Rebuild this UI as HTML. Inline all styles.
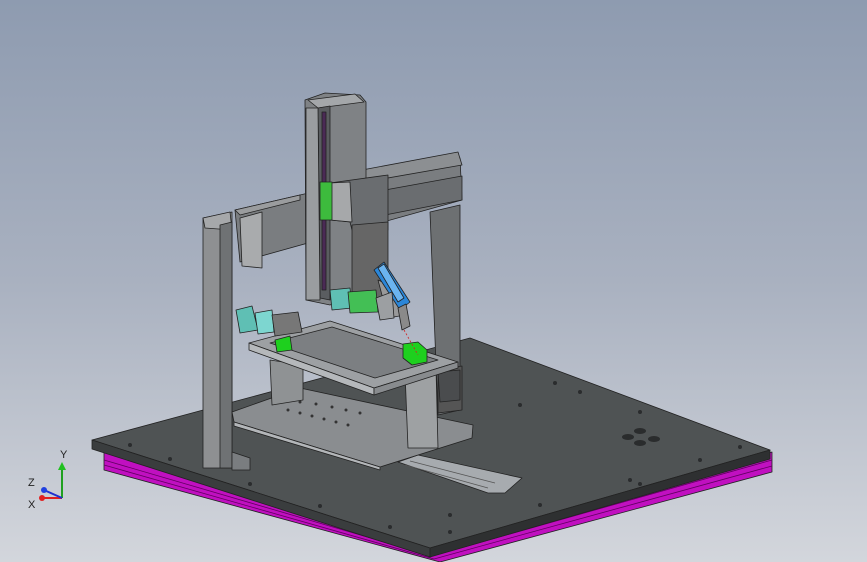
<!DOCTYPE html>
<html><head><style>
html,body{margin:0;padding:0;width:867px;height:562px;overflow:hidden}
body{background:linear-gradient(180deg,#8e9bb0 0%,#a9b1c0 50%,#d3d6dc 100%)}
svg{position:absolute;left:0;top:0}
</style></head><body>
<svg width="867" height="562" viewBox="0 0 867 562" stroke="#222" stroke-width="0.8" stroke-linejoin="round">
<!-- magenta base frame -->
<polygon points="104,452 430,550 772,452 772,472 440,562 104,470" fill="#c010c0"/>
<polyline points="104,460 432,556 772,460" fill="none" stroke="#600060"/>
<polyline points="104,465 434,559 772,466" fill="none" stroke="#600060"/>
<!-- base plate -->
<polygon points="92,440 470,338 770,450 430,548" fill="#4f5354"/>
<polygon points="92,440 430,548 430,557 92,449" fill="#3a3d3e"/>
<polygon points="430,548 770,450 770,459 430,557" fill="#2e3031"/>
<g fill="#2a2c2d" stroke="none">
<circle cx="130" cy="445" r="2"/><circle cx="170" cy="459" r="2"/><circle cx="250" cy="484" r="2"/><circle cx="320" cy="506" r="2"/><circle cx="390" cy="527" r="2"/><circle cx="450" cy="532" r="2"/><circle cx="540" cy="505" r="2"/><circle cx="630" cy="480" r="2"/><circle cx="700" cy="460" r="2"/><circle cx="740" cy="447" r="2"/><circle cx="640" cy="412" r="2"/><circle cx="580" cy="392" r="2"/><circle cx="555" cy="383" r="2"/><circle cx="520" cy="405" r="2"/><circle cx="640" cy="484" r="2"/><circle cx="450" cy="515" r="2"/>
<ellipse cx="628" cy="437" rx="6" ry="3"/><ellipse cx="640" cy="443" rx="6" ry="3"/><ellipse cx="654" cy="439" rx="6" ry="3"/><ellipse cx="640" cy="431" rx="6" ry="3"/>
</g>
<!-- rail -->
<polygon points="398,462 418,455 522,478 505,493 488,493" fill="#a7abaf"/>
<polyline points="405,465 488,488" fill="none" stroke="#555"/>
<polyline points="410,461 495,483" fill="none" stroke="#555"/>
<!-- right back column -->
<polygon points="430,212 460,205 460,410 438,415" fill="#6d7072"/>
<polygon points="438,370 462,366 462,410 438,413" fill="#555"/>
<!-- gantry beam -->
<polygon points="235,210 460,158 462,200 240,262" fill="#7a7d80"/>
<polygon points="235,210 300,195 300,200 240,215" fill="#9a9c9e"/>
<polygon points="362,170 458,152 462,165 365,182" fill="#8c8f92"/>
<polygon points="385,190 462,176 462,200 385,215" fill="#6a6d70"/>
<polygon points="240,218 262,212 262,268 242,266" fill="#a9abad"/>
<!-- left column -->
<polygon points="203,218 232,212 232,468 203,468" fill="#8e9092"/>
<polygon points="203,218 230,212 232,230 205,228" fill="#a6a8aa"/>
<polygon points="220,225 232,222 232,468 220,468" fill="#6f7274"/>
<polygon points="232,452 250,458 250,470 232,470" fill="#7a7d80"/>
<!-- lower table plate -->
<polygon points="232,412 300,388 473,425 472,438 380,467 234,422" fill="#8a8d90"/>
<polygon points="234,422 380,467 380,470 234,426" fill="#b3b6b9"/>
<g fill="#333" stroke="none">
<circle cx="288" cy="410" r="1.5"/><circle cx="300" cy="413" r="1.5"/><circle cx="312" cy="416" r="1.5"/><circle cx="324" cy="419" r="1.5"/><circle cx="336" cy="422" r="1.5"/><circle cx="348" cy="425" r="1.5"/>
<circle cx="300" cy="402" r="1.5"/><circle cx="316" cy="404" r="1.5"/><circle cx="332" cy="407" r="1.5"/><circle cx="346" cy="410" r="1.5"/><circle cx="360" cy="413" r="1.5"/>
</g>
<!-- supports -->
<polygon points="270,360 303,365 303,400 272,405" fill="#8f9294"/>
<polygon points="405,372 436,368 438,448 408,448" fill="#9ea1a3"/>
<!-- right side small block -->
<polygon points="438,372 460,370 460,400 440,402" fill="#4a4c4e"/>
<!-- top frame table -->
<polygon points="249,343 330,321 458,362 374,388" fill="#9da0a3"/>
<polygon points="270,343 332,327 438,360 375,378" fill="#7c7f82"/>
<polygon points="249,343 374,388 374,395 249,350" fill="#b5b8bb"/>
<polygon points="374,388 458,362 458,368 374,395" fill="#888b8e"/>
<polygon points="275,340 290,336 292,350 277,352" fill="#1ed01e"/>
<polygon points="403,344 418,342 427,350 427,362 412,365 403,358" fill="#1ed01e"/>
<!-- motor on left -->
<polygon points="236,310 252,306 258,330 240,333" fill="#5fbfb4"/>
<polygon points="255,313 272,310 274,332 258,334" fill="#7dd6d0"/>
<polygon points="272,315 298,312 302,332 275,336" fill="#777"/>
<!-- vertical Z axis -->
<polygon points="305,100 325,93 360,95 366,102 366,292 330,305 306,300" fill="#7f8285"/>
<polygon points="308,100 355,94 364,102 318,108" fill="#a4a7aa"/>
<polygon points="318,108 330,106 330,300 320,298" fill="#5a5d60"/>
<polygon points="322,112 326,112 326,290 322,290" fill="#4a2a55"/>
<polygon points="306,108 318,108 320,300 306,300" fill="#9a9da0"/>
<!-- carriage -->
<polygon points="330,183 388,175 388,230 352,230 350,222 330,220" fill="#6a6d70"/>
<polygon points="330,183 350,182 352,222 330,220" fill="#a6a8aa"/>
<polygon points="320,182 332,182 332,220 320,220" fill="#3dbb3d"/>
<polygon points="352,225 388,222 388,300 352,300" fill="#666"/>
<!-- motors on carriage -->
<polygon points="330,290 350,288 352,308 332,310" fill="#5fbfb4"/>
<polygon points="348,292 376,290 378,312 350,313" fill="#43bf55"/>
<polygon points="378,280 400,290 405,315 388,318" fill="#999"/>
<!-- syringe -->
<polygon points="374,270 384,262 410,302 400,310" fill="#2b86d8"/>
<polygon points="378,268 384,264 404,298 398,302" fill="#6bb4f0"/>
<polygon points="398,308 406,304 410,326 402,330" fill="#8a8a8a"/>
<line x1="404" y1="330" x2="418" y2="355" stroke="#d02020" stroke-dasharray="2,2"/>
<polygon points="376,298 392,292 394,318 380,320" fill="#9c9fa2"/>
</svg>
<!-- axis triad -->
<svg width="867" height="562" stroke-width="2">
<line x1="42" y1="498" x2="62" y2="498" stroke="#e02020"/>
<line x1="62" y1="498" x2="62" y2="468" stroke="#20a020"/>
<polygon points="58,470 62,462 66,470" fill="#20c020" stroke="none"/>
<line x1="62" y1="498" x2="44" y2="490" stroke="#2030d0"/>
<circle cx="42" cy="498" r="3" fill="#e02020" stroke="none"/>
<circle cx="44" cy="490" r="3" fill="#2040e0" stroke="none"/>
<text x="60" y="458" font-family="Liberation Sans, sans-serif" font-size="11" fill="#222" stroke="none">Y</text>
<text x="28" y="486" font-family="Liberation Sans, sans-serif" font-size="11" fill="#222" stroke="none">Z</text>
<text x="28" y="508" font-family="Liberation Sans, sans-serif" font-size="11" fill="#222" stroke="none">X</text>
</svg>
</body></html>
